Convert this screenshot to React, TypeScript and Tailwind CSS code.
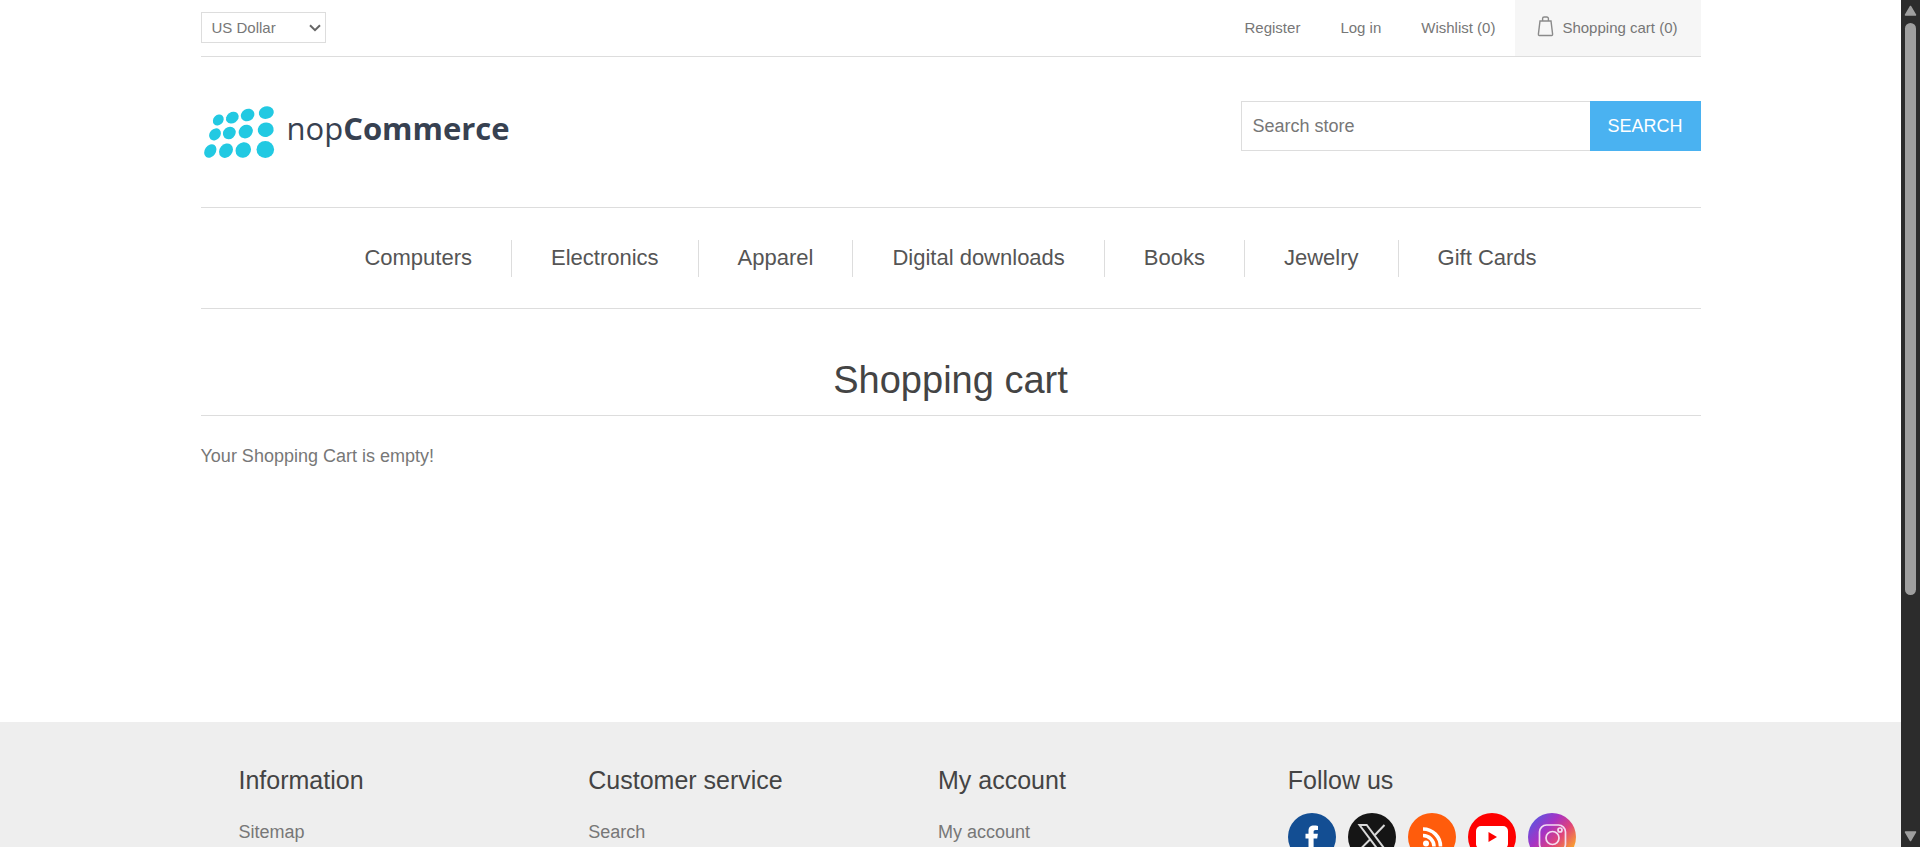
import type { ReactNode } from "react";

const topLinks = ["Register", "Log in", "Wishlist (0)"];

const categories = [
  "Computers",
  "Electronics",
  "Apparel",
  "Digital downloads",
  "Books",
  "Jewelry",
  "Gift Cards",
];

const footerColumns = [
  { title: "Information", link: "Sitemap" },
  { title: "Customer service", link: "Search" },
  { title: "My account", link: "My account" },
];

const logoDots: [number, number, number, number, number][] = [
  [28.3, 20, 5.9, 4.9, -45],
  [42.3, 17.7, 6.7, 5.5, -35],
  [57.6, 15, 7, 6, -30],
  [76.3, 12.6, 7.6, 6.2, -15],
  [25, 34.4, 6.6, 5.3, -48],
  [39.3, 33, 6.8, 5.9, -42],
  [55.7, 31.6, 7.4, 6.5, -35],
  [75.7, 29.7, 8, 7.2, -15],
  [20.3, 51, 7.3, 5.5, -55],
  [36, 50.7, 7.7, 6.4, -50],
  [53.3, 50, 8.2, 7.4, -48],
  [75.3, 49.4, 8.8, 8.5, 0],
];

function Logo() {
  return (
    <a href="#home" className="flex items-start" aria-label="nopCommerce">
      <svg width="86" height="58" viewBox="0 0 86 58" className="shrink-0" aria-hidden="true">
        <g fill="#22c9e2" transform="translate(-11 -1)">
          {logoDots.map(([cx, cy, rx, ry, angle]) => (
            <ellipse
              key={`${cx}-${cy}`}
              cx={cx}
              cy={cy}
              rx={rx}
              ry={ry}
              transform={`rotate(${angle} ${cx} ${cy})`}
            />
          ))}
        </g>
      </svg>
      <span className="font-['Open_Sans',sans-serif] text-[31px] leading-[54px] text-[#374151]">
        nop<span className="font-bold">Commerce</span>
      </span>
    </a>
  );
}

function BagIcon() {
  return (
    <svg width="17" height="22" viewBox="0 0 17 22" fill="none" stroke="#8a8a8a" aria-hidden="true">
      <path d="M3 6h11l1.6 13.2a1 1 0 0 1-1 1.3H2.4a1 1 0 0 1-1-1.3z" strokeWidth="1.4" />
      <path d="M5.6 6V3.6A1.6 1.6 0 0 1 7.2 2h2.6a1.6 1.6 0 0 1 1.6 1.6V6" strokeWidth="1.4" />
    </svg>
  );
}

function Badge({ label, children }: { label: string; children: ReactNode }) {
  return (
    <a href={`#${label.toLowerCase()}`} aria-label={label} className="block">
      <svg width="48" height="48" viewBox="0 0 48 48" aria-hidden="true">
        {children}
      </svg>
    </a>
  );
}

function SocialLinks() {
  return (
    <div className="flex gap-3">
      <Badge label="Facebook">
        <circle cx="24" cy="24" r="24" fill="#134e93" />
        <path
          d="M20.5 38V25.5h-3v-4.7h3V18c0-3.6 2-5.4 5.4-5.4 1.5 0 2.7.1 4.1.3v4.2h-2.4c-1.5 0-2 .7-2 1.9v1.8h4.3l-.7 4.7h-3.6V38z"
          fill="#fff"
        />
      </Badge>
      <Badge label="X">
        <circle cx="24" cy="24" r="24" fill="#151515" />
        <path
          d="M11.5 12h7.2l18 24h-7.2zM36.5 12 26.2 22.7M22 26.5 12 36.5"
          fill="none"
          stroke="#d8d8d8"
          strokeWidth="2"
        />
      </Badge>
      <Badge label="RSS">
        <circle cx="24" cy="24" r="24" fill="#ff5c0c" />
        <circle cx="18" cy="30.5" r="3" fill="#fff" />
        <path
          d="M15 22.5a11 11 0 0 1 11 11M15 16a17.5 17.5 0 0 1 17.5 17.5"
          fill="none"
          stroke="#fff"
          strokeWidth="3.6"
        />
      </Badge>
      <Badge label="YouTube">
        <circle cx="24" cy="24" r="24" fill="#fe0000" />
        <rect x="8" y="13" width="32" height="23" rx="5" fill="#fff" />
        <path d="M20.5 19v10l8.5-5z" fill="#fe0000" />
      </Badge>
      <Badge label="Instagram">
        <defs>
          <linearGradient id="insta" x1="0.1" y1="0.1" x2="0.9" y2="0.8">
            <stop offset="0" stopColor="#5b55e0" />
            <stop offset="0.35" stopColor="#a633c4" />
            <stop offset="0.65" stopColor="#e0437a" />
            <stop offset="1" stopColor="#fba52a" />
          </linearGradient>
        </defs>
        <circle cx="24" cy="24" r="24" fill="url(#insta)" />
        <g fill="none" stroke="#f3dcf1" strokeWidth="1.7">
          <rect x="11.5" y="12" width="26" height="26" rx="7" />
          <circle cx="24.5" cy="25" r="6.5" />
          <circle cx="32" cy="17" r="2" />
        </g>
      </Badge>
    </div>
  );
}

function ScrollTrack() {
  return (
    <div className="flex w-[19px] shrink-0 flex-col items-center bg-[#2c2c2c] py-[5px]" aria-hidden="true">
      <svg width="13" height="11" viewBox="0 0 13 11">
        <path d="M6.5 1.5 11.5 10h-10z" fill="#9f9f9f" stroke="#9f9f9f" strokeWidth="1.5" strokeLinejoin="round" />
      </svg>
      <div className="flex w-[11px] flex-1 flex-col py-[7px]">
        <div className="flex-5 rounded-full bg-[#9f9f9f]" />
        <div className="flex-2" />
      </div>
      <svg width="13" height="11" viewBox="0 0 13 11">
        <path d="M6.5 9.5 11.5 1h-10z" fill="#9f9f9f" stroke="#9f9f9f" strokeWidth="1.5" strokeLinejoin="round" />
      </svg>
    </div>
  );
}

export default function App() {
  return (
    <div className="flex h-screen overflow-hidden bg-white font-['Liberation_Sans',Arial,sans-serif] text-lg text-[#777]">
      <div className="flex min-w-0 flex-1 flex-col overflow-hidden">
        <div className="mx-auto w-full max-w-[1500px]">
          <header>
            <div className="flex h-[57px] items-stretch justify-between border-b border-[#ddd] text-[15px]">
              <div className="relative mt-3 h-[31px] w-[125px]">
                <select
                  aria-label="Currency"
                  className="h-full w-full appearance-none border border-[#ddd] bg-white pr-6 pl-[10px] text-[15px] text-[#777]"
                >
                  <option>US Dollar</option>
                </select>
                <svg
                  className="pointer-events-none absolute top-3 right-[5px]"
                  width="12"
                  height="8"
                  viewBox="0 0 12 8"
                  fill="none"
                  stroke="#666"
                  strokeWidth="2"
                  aria-hidden="true"
                >
                  <path d="M1 1.2 6 6.2 11 1.2" />
                </svg>
              </div>
              <nav aria-label="Account" className="flex">
                {topLinks.map((label) => (
                  <a key={label} href="#account" className="flex items-center px-5 pb-px">
                    {label}
                  </a>
                ))}
                <a href="#cart" className="flex items-center gap-2 bg-[#f6f6f6] pr-[23px] pb-px pl-[22px]">
                  <span className="pb-1">
                    <BagIcon />
                  </span>
                  Shopping cart (0)
                </a>
              </nav>
            </div>
            <div className="flex items-start justify-between pt-11 pb-12">
              <Logo />
              <form className="flex h-[50px]" onSubmit={(e) => e.preventDefault()}>
                <input
                  type="text"
                  aria-label="Search store"
                  placeholder="Search store"
                  className="w-[349px] border border-r-0 border-[#ddd] bg-white px-[11px] text-lg placeholder:text-[#777]"
                />
                <button type="submit" className="w-[111px] bg-[#4ab2f1] text-lg text-white">
                  SEARCH
                </button>
              </form>
            </div>
          </header>
          <nav aria-label="Categories" className="border-y border-[#ddd] pt-8 pb-[31px]">
            <ul className="flex justify-center divide-x divide-[#ddd]">
              {categories.map((label) => (
                <li key={label} className="px-[39px] pb-px">
                  <a href="#category" className="block text-[22px] leading-9 text-[#555]">
                    {label}
                  </a>
                </li>
              ))}
            </ul>
          </nav>
          <main className="min-h-[413px] pt-[41px]">
            <h1 className="border-b border-[#ddd] pb-[5px] text-center text-[38px] leading-[60px] text-[#444]">
              Shopping cart
            </h1>
            <p className="pt-[26px] leading-7">Your Shopping Cart is empty!</p>
          </main>
        </div>
        <footer className="flex-1 bg-[#eee]">
          <div className="mx-auto grid w-full max-w-[1500px] grid-cols-[14fr_14fr_14fr_15fr] px-[38px] pt-11">
            {footerColumns.map(({ title, link }) => (
              <section key={title}>
                <h2 className="text-[25px] leading-7 text-[#444]">{title}</h2>
                <a href="#footer" className="mt-6 block leading-7">
                  {link}
                </a>
              </section>
            ))}
            <section>
              <h2 className="mb-[19px] text-[25px] leading-7 text-[#444]">Follow us</h2>
              <SocialLinks />
            </section>
          </div>
        </footer>
      </div>
      <ScrollTrack />
    </div>
  );
}
